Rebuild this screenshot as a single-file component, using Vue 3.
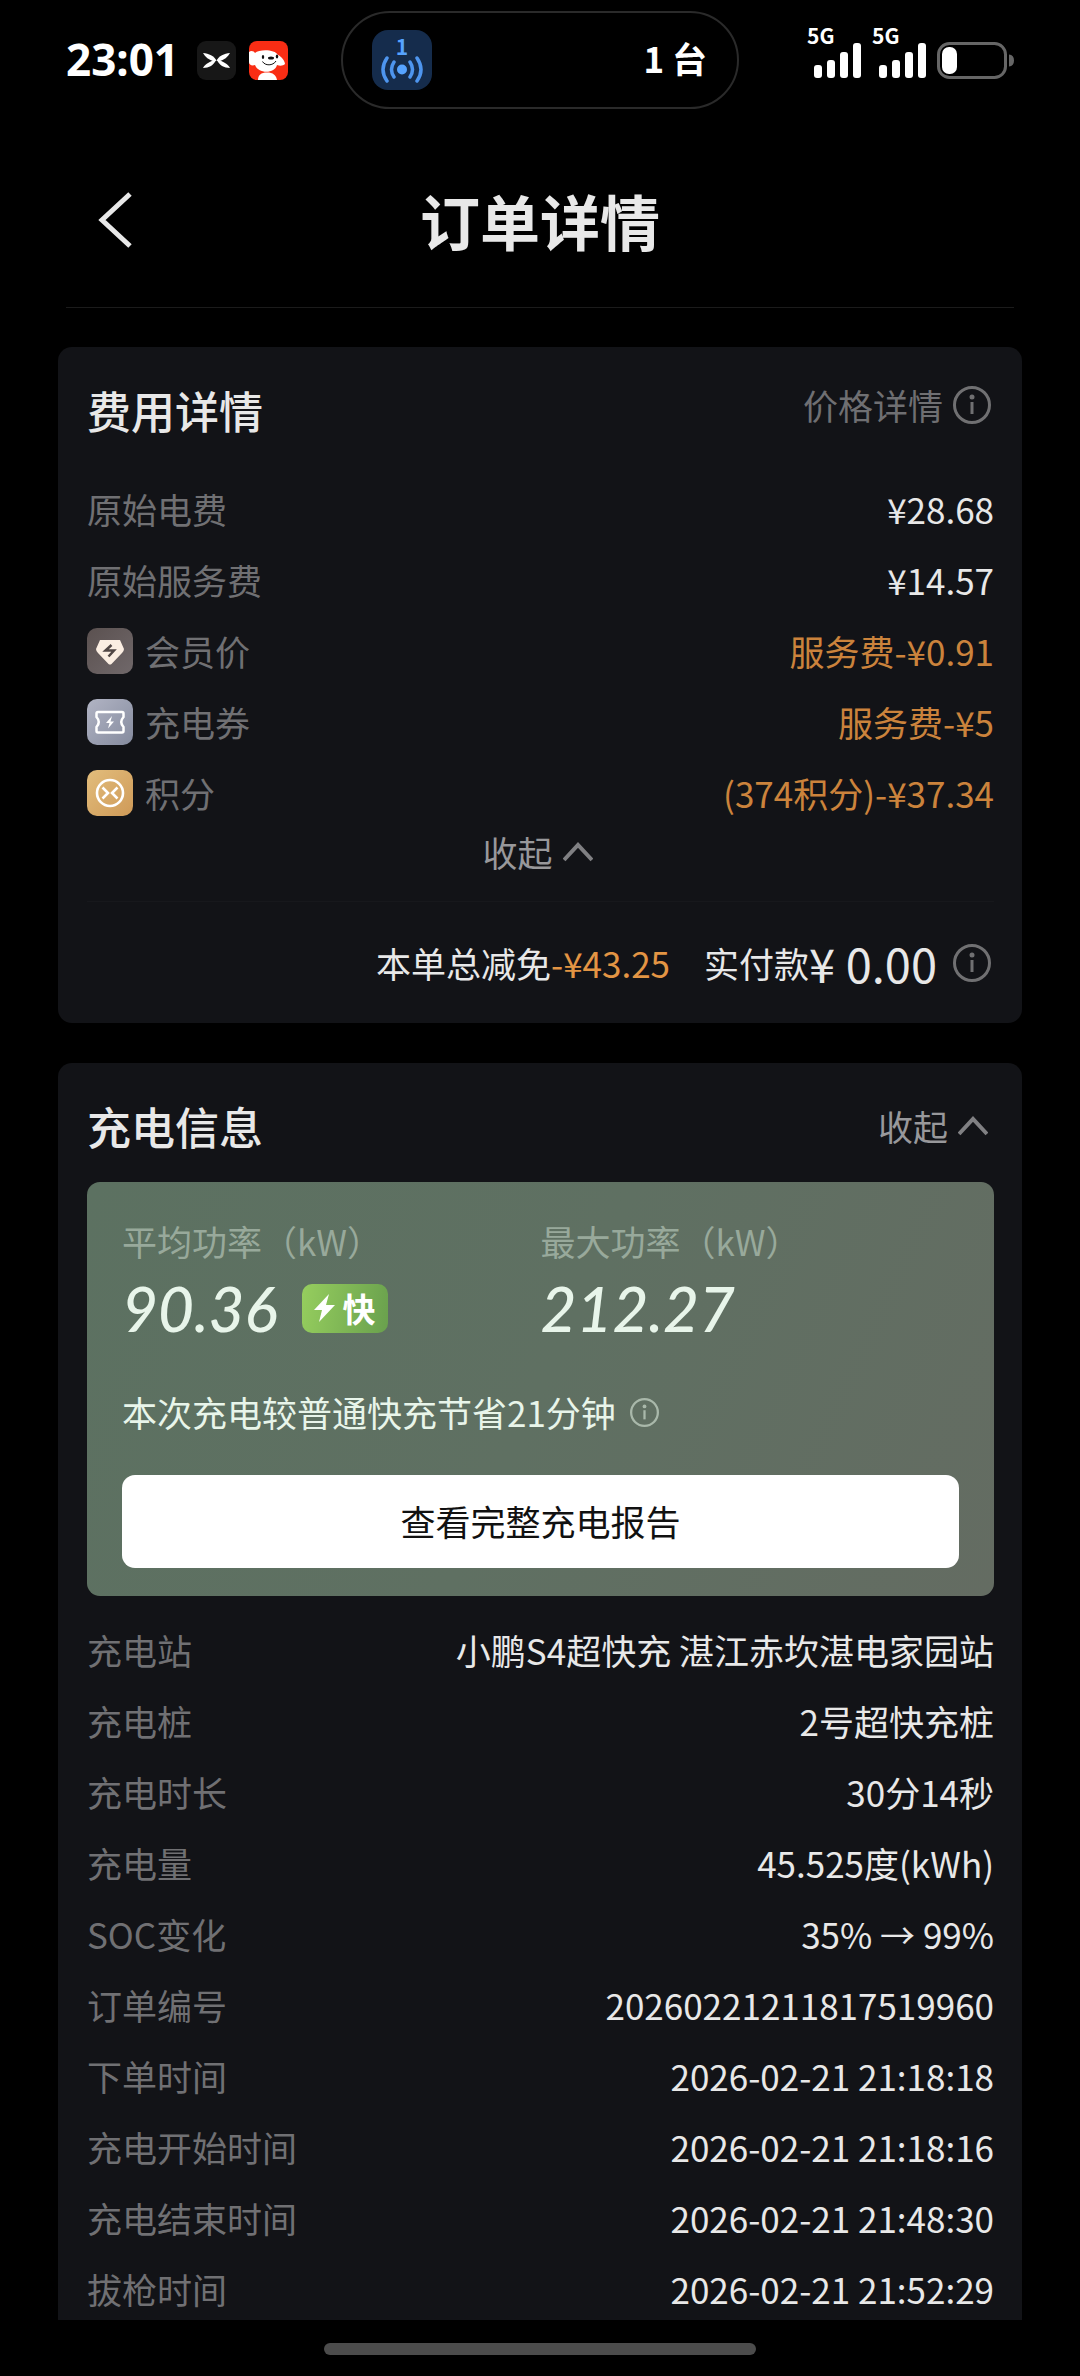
<script setup>
const feeRows = [
  { label: '原始电费', value: '¥28.68' },
  { label: '原始服务费', value: '¥14.57' },
  { label: '会员价', value: '服务费-¥0.91', icon: 'member', discount: true },
  { label: '充电券', value: '服务费-¥5', icon: 'coupon', discount: true },
  { label: '积分', value: '(374积分)-¥37.34', icon: 'points', discount: true },
]

const chargeRows = [
  { label: '充电站', value: '小鹏S4超快充 湛江赤坎湛电家园站' },
  { label: '充电桩', value: '2号超快充桩' },
  { label: '充电时长', value: '30分14秒' },
  { label: '充电量', value: '45.525度(kWh)' },
  { label: 'SOC变化', value: '35% → 99%' },
  { label: '订单编号', value: '20260221211817519960' },
  { label: '下单时间', value: '2026-02-21 21:18:18' },
  { label: '充电开始时间', value: '2026-02-21 21:18:16' },
  { label: '充电结束时间', value: '2026-02-21 21:48:30' },
  { label: '拔枪时间', value: '2026-02-21 21:52:29' },
]
</script>

<template>
  <div class="screen" lang="zh-CN">
    <div class="status">
      <div class="status-left">
        <span class="clock">23:01</span>
        <svg class="app-icon" viewBox="0 0 39 39" aria-hidden="true">
          <rect width="39" height="39" rx="9" fill="#171717" />
          <g fill="#fff">
            <path d="M6 12 C12 12.500 17 15 19.500 19.500 L17 20.500 C12 19 8 16 6 12Z" />
            <path d="M33 12 C27 12.500 22 15 19.500 19.500 L22 20.500 C27 19 31 16 33 12Z" />
            <path d="M6 27 C8 23 13 20 19 19 C17 24 12 27 6 27Z" />
            <path d="M33 27 C31 23 26 20 20 19 C22 24 27 27 33 27Z" />
          </g>
        </svg>
        <svg class="app-icon dog" viewBox="0 0 39 39" aria-hidden="true">
          <rect width="39" height="39" rx="8" fill="#f92d14" />
          <path d="M9 39 C9 34 12 31.500 18 31.500 C24 31.500 27 34 28 39Z" fill="#fff" />
          <path d="M0 11 C2 9 5 10 6 12 C10 8 26 8 29 14 C32 15 36 20 36 23 C34 25 31 25 28 24 C26 33 9 33 6 24 C3 25 0 24 0 21Z" fill="#fff" />
          <ellipse cx="22" cy="17" rx="3" ry="1.500" fill="#111" />
          <ellipse cx="14" cy="16" rx="1.200" ry="2" fill="#111" />
          <ellipse cx="28" cy="15.500" rx="1.200" ry="2" fill="#111" />
          <path d="M13.500 20.500 C16 25 24 25 27 20" fill="none" stroke="#111" />
        </svg>
      </div>
      <div class="island">
        <div class="hotspot">
          <span class="hotspot-count">1</span>
          <svg viewBox="0 0 44 27" aria-hidden="true">
            <circle cx="22" cy="13.500" r="5" fill="#56a3ff" />
            <g fill="none" stroke="#4e95ee" stroke-width="3.500" stroke-linecap="round">
              <path d="M14 6 Q9 13.500 14 21M30 6 Q35 13.500 30 21M7 2 Q-1 13.500 7 25M37 2 Q45 13.500 37 25" />
            </g>
          </svg>
        </div>
        <span class="island-text">1 台</span>
      </div>
      <div class="status-right">
        <div v-for="n in 2" :key="n" class="signal">
          <span>5G</span>
          <svg viewBox="0 0 47 35" fill="#fff" aria-hidden="true">
            <rect y="22" width="8" height="13" rx="3" />
            <rect x="13" y="17" width="8" height="18" rx="3" />
            <rect x="26" y="9" width="8" height="26" rx="3" />
            <rect x="39" width="8" height="35" rx="3" />
          </svg>
        </div>
        <svg class="battery" viewBox="0 0 77 37" aria-hidden="true">
          <rect x="1.500" y="1.500" width="67" height="34" rx="11" fill="none" stroke="#666" stroke-width="3" />
          <rect x="5" y="5" width="15" height="27" rx="7" fill="#fff" />
          <path d="M72 12.500 Q77 13 77 18.500 Q77 24 72 24.500Z" fill="#666" />
        </svg>
      </div>
    </div>

    <header class="app-bar">
      <button class="back" type="button" aria-label="返回">
        <svg viewBox="0 0 36 56" aria-hidden="true">
          <path d="M32 2 L4 28 L32 54" fill="none" stroke="#e8e8e8" stroke-width="5" />
        </svg>
      </button>
      <h1>订单详情</h1>
    </header>

    <main>
      <section class="card">
        <div class="card-head">
          <h2>费用详情</h2>
          <button class="link price-link" type="button">
            价格详情
            <svg class="info" viewBox="0 0 38 38" aria-hidden="true">
              <circle cx="19" cy="19" r="17.500" />
              <path d="M19 16V28" /><circle class="dot" cx="19" cy="11" r="2.500" />
            </svg>
          </button>
        </div>
        <dl class="fees">
          <div v-for="row in feeRows" :key="row.label" class="row">
            <dt>
              <svg v-if="row.icon === 'member'" class="tag" viewBox="0 0 46 46" aria-hidden="true">
                <defs><linearGradient id="member" x1="0" y1="0" x2="1" y2="1"><stop stop-color="#5b5150" /><stop offset="1" stop-color="#70686a" /></linearGradient></defs>
                <rect width="46" height="46" rx="10" fill="url(#member)" />
                <path d="M13 12 H33 L37 21 Q37 23 35 25 L24.500 36 Q23 37 21.500 36 L11 25 Q9 23 9 21Z" fill="#fbeee2" />
                <path d="M24.500 17 L18.500 22.500 L27 22.500 L21.500 28.500" fill="none" stroke="#514745" stroke-width="2.500" />
              </svg>
              <svg v-else-if="row.icon === 'coupon'" class="tag" viewBox="0 0 46 46" aria-hidden="true">
                <defs><linearGradient id="coupon" x1="0" y1="0" x2="1" y2="1"><stop stop-color="#b1b4c4" /><stop offset="1" stop-color="#858b9e" /></linearGradient></defs>
                <rect width="46" height="46" rx="10" fill="url(#coupon)" />
                <path d="M11 13 H35 Q36.500 13 36.500 14.500 V18 Q32 23 36.500 28 V32 Q36.500 33.500 35 33.500 H11 Q9.500 33.500 9.500 32 V28 Q14 23 9.500 18 V14.500 Q9.500 13 11 13Z" fill="none" stroke="#fff" stroke-width="2.500" />
                <path d="M25 17 L19 24 H22.500 L21 29.500 L27 22.500 H23.500Z" fill="#fff" />
              </svg>
              <svg v-else-if="row.icon === 'points'" class="tag" viewBox="0 0 46 46" aria-hidden="true">
                <defs><linearGradient id="points" x1="0" y1="0" x2="1" y2="1"><stop stop-color="#e2bd7c" /><stop offset="1" stop-color="#cf9a58" /></linearGradient></defs>
                <rect width="46" height="46" rx="10" fill="url(#points)" />
                <g fill="none" stroke="#fff" stroke-width="2.600">
                  <circle cx="23" cy="23" r="13" />
                  <path d="M15.500 17.500 L21 23 L15.500 28.500M30.500 17.500 L25 23 L30.500 28.500" />
                </g>
              </svg>
              {{ row.label }}
            </dt>
            <dd :class="{ discount: row.discount }">{{ row.value }}</dd>
          </div>
        </dl>
        <button class="link fold" type="button">
          收起
          <svg class="chevron" viewBox="0 0 30 20" aria-hidden="true"><path d="M1 18 L15 3 L29 18" /></svg>
        </button>
        <div class="totals">
          <span>本单总减免<span class="saved">-¥43.25</span></span>
          <span class="paid">实付款<strong>¥ 0.00</strong></span>
          <svg class="info" viewBox="0 0 38 38" aria-hidden="true">
            <circle cx="19" cy="19" r="17.500" />
            <path d="M19 16V28" /><circle class="dot" cx="19" cy="11" r="2.500" />
          </svg>
        </div>
      </section>

      <section class="card">
        <div class="card-head">
          <h2>充电信息</h2>
          <button class="link" type="button">
            收起
            <svg class="chevron" viewBox="0 0 30 20" aria-hidden="true"><path d="M1 18 L15 3 L29 18" /></svg>
          </button>
        </div>
        <div class="power">
          <div class="metrics">
            <div>
              <p class="metric-label">平均功率（kW）</p>
              <p class="metric-value">
                90.36
                <span class="fast">
                  <svg viewBox="0 0 21 28" aria-hidden="true"><path d="M15 0 L0 16 H8 L5 28 L21 11 H12Z" fill="#fff" /></svg>快
                </span>
              </p>
            </div>
            <div>
              <p class="metric-label">最大功率（kW）</p>
              <p class="metric-value">212.27</p>
            </div>
          </div>
          <p class="note">
            本次充电较普通快充节省21分钟
            <svg class="info" viewBox="0 0 38 38" aria-hidden="true">
              <circle cx="19" cy="19" r="17.500" />
              <path d="M19 16V28" /><circle class="dot" cx="19" cy="11" r="2.500" />
            </svg>
          </p>
          <button class="report" type="button">查看完整充电报告</button>
        </div>
        <dl class="details">
          <div v-for="row in chargeRows" :key="row.label" class="row">
            <dt>{{ row.label }}</dt>
            <dd>{{ row.value }}</dd>
          </div>
        </dl>
      </section>
    </main>

    <div class="home-area"><div class="home-bar"></div></div>
  </div>
</template>

<style>
body {
  background: #000;
}
</style>

<style scoped>
* {
  box-sizing: border-box;
  margin: 0;
}

.screen {
  display: flex;
  flex-direction: column;
  height: 100vh;
  overflow: hidden;
  background: #000;
  color: #e8e8e8;
  font-family: "Noto Sans CJK SC", sans-serif;
  font-size: 35px;
  line-height: 48px;
}

svg {
  display: block;
  flex: none;
}

button {
  border: 0;
  padding: 0;
  background: none;
  color: inherit;
  font: inherit;
}

.status {
  display: grid;
  grid-template-columns: 1fr 398px 1fr;
  align-items: center;
  flex: none;
  height: 120px;
  color: #fff;
  font-weight: 700;
}

.status-left {
  display: flex;
  align-items: center;
  padding-left: 66px;
}

.clock {
  width: 131px;
  padding-bottom: 2px;
  font-family: "Noto Sans", sans-serif;
  font-size: 44px;
}

.app-icon {
  width: 39px;
}

.dog {
  margin-left: 13px;
}

.island {
  display: flex;
  align-items: center;
  justify-content: space-between;
  height: 98px;
  padding: 0 30px 0 29px;
  border: 2px solid #2a2a2a;
  border-radius: 49px;
}

.island-text {
  padding-bottom: 4px;
}

.hotspot {
  display: flex;
  flex-direction: column;
  align-items: center;
  width: 60px;
  height: 60px;
  padding-top: 6px;
  border-radius: 16px;
  background: #152c4c;
  color: #56a3ff;
}

.hotspot-count {
  font-size: 21px;
  line-height: 20px;
}

.hotspot svg {
  width: 44px;
}

.status-right {
  display: flex;
  align-items: center;
  justify-content: flex-end;
  padding-right: 66px;
}

.signal {
  display: flex;
  flex-direction: column;
  width: 54px;
  margin-right: 11px;
  padding-bottom: 16px;
  font-size: 21px;
  line-height: 16px;
}

.signal svg {
  align-self: flex-end;
  width: 47px;
}

.battery {
  width: 77px;
}

.app-bar {
  position: relative;
  display: flex;
  align-items: center;
  justify-content: center;
  flex: none;
  height: 168px;
  margin: 20px 66px 39px;
  padding-bottom: 8px;
  border-bottom: 1px solid #1b1b1b;
}

.back {
  position: absolute;
  left: 32px;
}

.back svg {
  width: 36px;
}

h1 {
  font-size: 60px;
  line-height: 72px;
  font-weight: 700;
}

main {
  flex: 1;
  min-height: 0;
  overflow: hidden;
  padding: 0 58px;
}

.card {
  padding: 0 28px 0 29px;
  border-radius: 14px;
  background: #121317;
}

.card + .card {
  margin-top: 40px;
}

.card-head {
  display: flex;
  align-items: center;
  justify-content: space-between;
  height: 119px;
  padding-top: 7px;
}

h2 {
  font-size: 44px;
  line-height: 48px;
  font-weight: 500;
}

.link {
  display: flex;
  align-items: center;
  gap: 10px;
  padding-right: 6px;
  color: #98989b;
}

.price-link {
  padding: 0 3px 10px 0;
  color: #6f6f72;
}

.info {
  width: 38px;
  fill: none;
  stroke: #707072;
  stroke-width: 3;
}

.dot {
  fill: #707072;
  stroke: none;
}

.chevron {
  width: 30px;
  fill: none;
  stroke: #808083;
  stroke-width: 4;
}

.fees {
  padding-top: 7px;
}

.row {
  display: flex;
  align-items: center;
  justify-content: space-between;
  height: 71px;
}

dt {
  display: flex;
  align-items: center;
  gap: 12px;
  color: #707073;
}

.tag {
  width: 46px;
}

.discount {
  color: #cb833c;
}

.fold {
  width: 100%;
  justify-content: center;
}

.totals {
  display: flex;
  align-items: center;
  justify-content: flex-end;
  height: 122px;
  margin-top: 25px;
  padding-right: 3px;
  border-top: 1px solid #17181c;
}

.saved {
  color: #e39544;
}

.paid {
  display: flex;
  align-items: center;
  margin: 0 16px 0 34px;
}

.paid strong {
  font-size: 47px;
  font-weight: 400;
}

.power {
  padding: 35px 35px 28px;
  border-radius: 13px;
  background: linear-gradient(115deg, #5c7161, #5f7062 50%, #646c62);
  color: #e8f5ea;
}

.metrics {
  display: grid;
  grid-template-columns: 1fr 1fr;
}

.metric-label {
  color: #98a99b;
}

.metric-value {
  display: flex;
  align-items: center;
  gap: 24px;
  height: 60px;
  margin-top: 13px;
  font-family: Lato, sans-serif;
  font-size: 62px;
  font-style: italic;
  font-weight: 500;
}

.fast {
  display: flex;
  align-items: center;
  justify-content: center;
  gap: 8px;
  width: 86px;
  height: 49px;
  border-radius: 10px;
  background: linear-gradient(100deg, #96ce5e, #69a04d);
  color: #fff;
  font-family: "Noto Sans CJK SC", sans-serif;
  font-size: 33px;
  font-style: normal;
  font-weight: 700;
}

.fast svg {
  width: 21px;
}

.note {
  display: flex;
  align-items: center;
  gap: 14px;
  margin-top: 50px;
}

.note .info {
  width: 29px;
  stroke: #a9b8aa;
}

.note .dot {
  fill: #a9b8aa;
  stroke: none;
}

.report {
  width: 100%;
  height: 93px;
  margin-top: 39px;
  padding-bottom: 2px;
  border-radius: 13px;
  background: #fff;
  color: #111;
}

.details {
  padding: 18px 0 28px;
}

.home-area {
  display: flex;
  justify-content: center;
  flex: none;
  height: 56px;
  padding-top: 23px;
}

.home-bar {
  width: 40%;
  height: 12px;
  border-radius: 6px;
  background: #4c4c4c;
}
</style>
